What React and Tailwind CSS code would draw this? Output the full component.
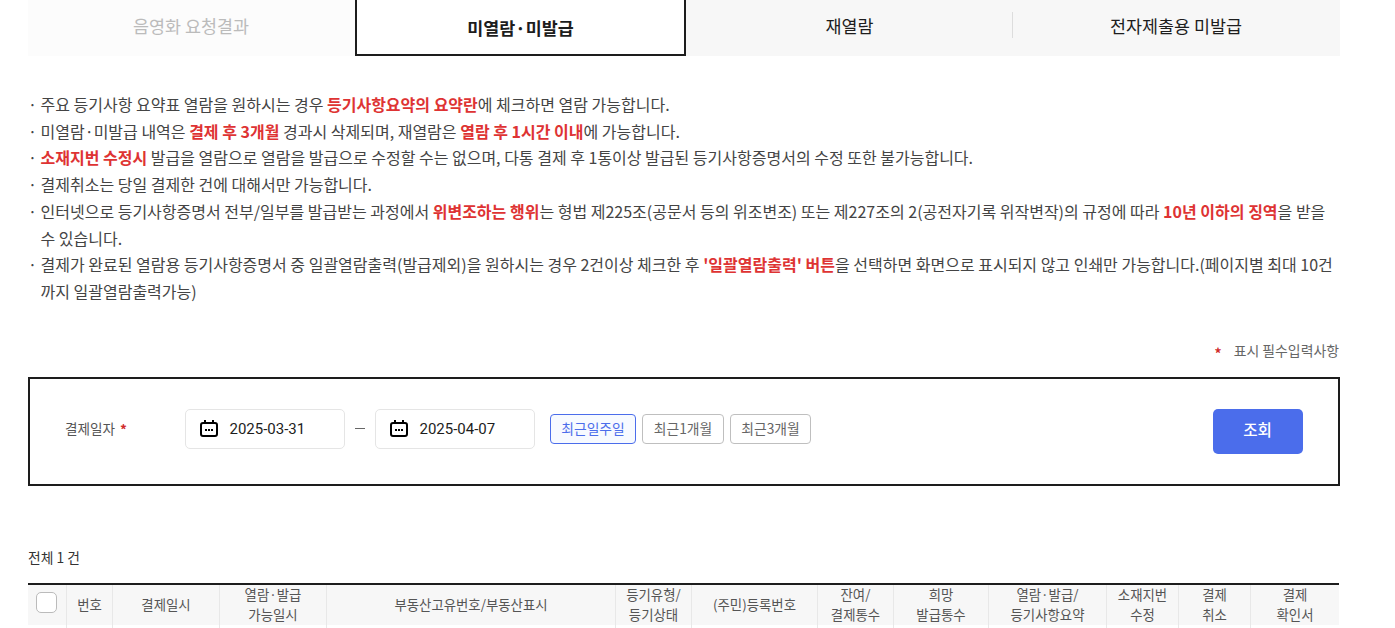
const tabs = [
  { id: "shade", label: "음영화 요청결과", disabled: true },
  { id: "unread", label: "미열람·미발급", active: true },
  { id: "reread", label: "재열람", divider: true },
  { id: "esubmit", label: "전자제출용 미발급" },
];

const periods = [
  { label: "최근일주일", width: "w-[86px]", active: true },
  { label: "최근1개월", width: "w-[82px]" },
  { label: "최근3개월", width: "w-[81px]" },
];

const columns = [
  { lines: ["번호"], width: "w-[46px]" },
  { lines: ["결제일시"], width: "w-[107px]" },
  { lines: ["열람·발급", "가능일시"], width: "w-[107px]" },
  { lines: ["부동산고유번호/부동산표시"], width: "w-[289px]" },
  { lines: ["등기유형/", "등기상태"], width: "w-[76px]" },
  { lines: ["(주민)등록번호"], width: "w-[126px]" },
  { lines: ["잔여/", "결제통수"], width: "w-[76px]" },
  { lines: ["희망", "발급통수"], width: "w-[95px]" },
  { lines: ["열람·발급/", "등기사항요약"], width: "w-[118px]" },
  { lines: ["소재지번", "수정"], width: "w-[72px]" },
  { lines: ["결제", "취소"], width: "w-[72px]" },
  { lines: ["결제", "확인서"], width: "w-[88px]" },
];

export default function App() {
  return (
    <div className="h-[628px] w-[1395px] overflow-hidden bg-white pl-7 font-['Noto_Sans_CJK_KR',sans-serif] text-[#444]">
      <div className="w-[1312px]">
        {/* ── TABS ── */}
        <nav className="flex h-14">
          {tabs.map((tab) => (
            <Tab key={tab.id} tab={tab} />
          ))}
        </nav>

        {/* ── NOTICE ── */}
        <ul className="mt-[35px] text-[16px] leading-[26.7px]">
          <Notice>
            주요 등기사항 요약표 열람을 원하시는 경우 <Em>등기사항요약의 요약란</Em>에
            체크하면 열람 가능합니다.
          </Notice>
          <Notice>
            미열람·미발급 내역은 <Em>결제 후 3개월</Em> 경과시 삭제되며, 재열람은{" "}
            <Em>열람 후 1시간 이내</Em>에 가능합니다.
          </Notice>
          <Notice>
            <Em>소재지번 수정시</Em> 발급을 열람으로 열람을 발급으로 수정할 수는
            없으며, 다통 결제 후 1통이상 발급된 등기사항증명서의 수정 또한
            불가능합니다.
          </Notice>
          <Notice>결제취소는 당일 결제한 건에 대해서만 가능합니다.</Notice>
          <Notice>
            인터넷으로 등기사항증명서 전부/일부를 발급받는 과정에서{" "}
            <Em>위변조하는 행위</Em>는 형법 제225조(공문서 등의 위조변조) 또는
            제227조의 2(공전자기록 위작변작)의 규정에 따라{" "}
            <Em>10년 이하의 징역</Em>을 받을
            <br />수 있습니다.
          </Notice>
          <Notice>
            결제가 완료된 열람용 등기사항증명서 중 일괄열람출력(발급제외)을
            원하시는 경우 2건이상 체크한 후 <Em>'일괄열람출력' 버튼</Em>을 선택하면
            화면으로 표시되지 않고 인쇄만 가능합니다.(페이지별 최대 10건
            <br />
            까지 일괄열람출력가능)
          </Notice>
        </ul>

        {/* ── SEARCH FORM ── */}
        <p className="mt-9 flex h-5 items-center justify-end gap-3 pr-px text-[13.9px] text-[#666]">
          <span className="pt-[5px] font-bold text-[#d02c2c]">*</span>
          표시 필수입력사항
        </p>
        <section className="mt-4 flex h-[109px] items-start border-2 border-[#1d1d1d] pt-[30px] pr-[35px] pl-[35px]">
          <div className="flex h-[39px] w-[120px] items-center gap-[5px] text-[13.6px] text-[#555]">
            결제일자
            <span className="pt-[2px] font-bold text-[#d02c2c]">*</span>
          </div>
          <DateInput value="2025-03-31" />
          <span className="mx-[10px] mt-[19px] h-px w-[10px] bg-[#666]" />
          <DateInput value="2025-04-07" />
          <div className="mt-[5px] ml-[15px] flex gap-[6px]">
            {periods.map((p) => (
              <button
                key={p.label}
                className={`h-[30px] rounded-[4px] border pb-px text-[13.8px] leading-[27px] whitespace-nowrap ${p.width} ${
                  p.active
                    ? "border-[#4b6deb] bg-[#f7faff] text-[#4b6deb]"
                    : "border-[#bfbfbf] bg-white text-[#666]"
                }`}
              >
                {p.label}
              </button>
            ))}
          </div>
          <button className="ml-auto h-[45px] w-[90px] rounded-[5px] bg-[#4b6deb] pr-px pb-[2px] text-[15.6px] font-medium text-white">
            조회
          </button>
        </section>

        {/* ── RESULT TABLE ── */}
        <p className="mt-[61px] h-5 text-[13.8px] leading-5 text-[#333]">
          전체 1 건
        </p>
        <div className="mt-4 flex w-[1311px] border-t-2 border-[#1d1d1d] text-[13.4px] leading-5 text-[#555]">
          <HeadCell width="w-[39px]">
            <span className="mb-[3px] ml-[-1px] size-[21px] rounded-[5px] border border-[#bbb] bg-white" />
          </HeadCell>
          {columns.map((col, i) => (
            <HeadCell
              key={i}
              width={col.width}
              last={i === columns.length - 1}
            >
              {col.lines.map((line) => (
                <span key={line}>{line}</span>
              ))}
            </HeadCell>
          ))}
        </div>
      </div>
    </div>
  );
}

function Tab({ tab }) {
  if (tab.active) {
    return (
      <button className="z-10 -mr-[2px] -ml-px w-[331px] border-2 border-t-0 border-[#1d1d1d] bg-white pt-[2px] text-[17.4px] font-bold text-[#1d1d1d]">
        {tab.label}
      </button>
    );
  }
  return (
    <button
      className={`flex w-[328px] items-center text-[17.4px] ${
        tab.disabled
          ? "bg-[#fcfcfc] pr-[2px] text-[#bbb]"
          : "bg-[#f7f7f7] text-[#1d1d1d]"
      } ${tab.divider ? "-mr-px w-[329px] pl-[3px]" : ""}`}
    >
      <span className="flex-1 pb-[4px]">{tab.label}</span>
      {tab.divider && <span className="z-10 mb-[6px] h-[26px] w-px bg-[#ddd]" />}
    </button>
  );
}

function Notice({ children }) {
  return (
    <li className="flex whitespace-nowrap">
      <span className="w-[12.5px] shrink-0">·</span>
      <p>{children}</p>
    </li>
  );
}

function Em({ children }) {
  return <strong className="font-bold text-[#de3333]">{children}</strong>;
}

function DateInput({ value }) {
  return (
    <div className="flex h-10 w-40 items-center rounded-[5px] border border-[#e5e5e5] bg-white pl-[14px]">
      <CalendarIcon />
      <span className="ml-[11.5px] pt-px font-[Roboto,sans-serif] text-[15px] text-[#1d1d1d]">
        {value}
      </span>
    </div>
  );
}

function CalendarIcon() {
  return (
    <svg width="18" height="18" viewBox="0 0 18 18" fill="none">
      <rect x="1" y="3" width="16" height="13" rx="2" stroke="#000" strokeWidth="2" />
      <path d="M5 0v4M13 0v4" stroke="#000" strokeWidth="2" />
      <path d="M5 10h2M8 10h2M11 10h2" stroke="#000" strokeWidth="2" />
    </svg>
  );
}

function HeadCell({ width, last, children }) {
  return (
    <div
      className={`flex h-[43px] shrink-0 flex-col ${width} ${
        last ? "" : "border-r border-[#e8e8e8]"
      }`}
    >
      <div className="flex h-10 flex-col items-center justify-center bg-[#f7f7f7] pb-[2px] whitespace-nowrap">
        {children}
      </div>
    </div>
  );
}
